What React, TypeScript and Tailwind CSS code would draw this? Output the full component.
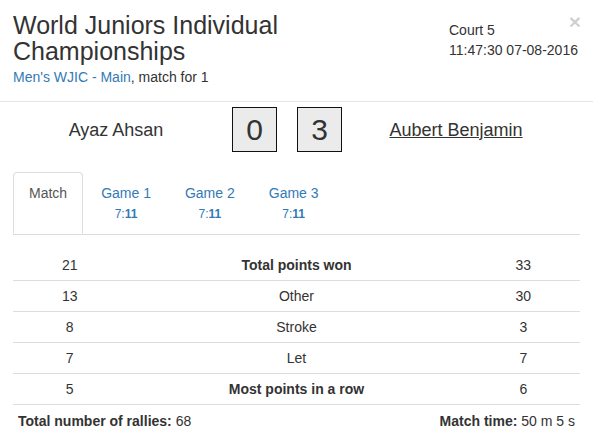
import React from "react";

type StatRow = { left: number; label: string; right: number; strong?: boolean };

const ROWS: StatRow[] = [
  { left: 21, label: "Total points won", right: 33, strong: true },
  { left: 13, label: "Other", right: 30 },
  { left: 8, label: "Stroke", right: 3 },
  { left: 7, label: "Let", right: 7 },
  { left: 5, label: "Most points in a row", right: 6, strong: true },
];

const GAMES = ["Game 1", "Game 2", "Game 3"];

function ScoreBox({ value }: { value: number }) {
  return (
    <div className="flex h-[45px] w-[45px] items-center justify-center border border-[#111] bg-[#ebebeb] text-[30px] leading-none text-[#333]">
      {value}
    </div>
  );
}

export default function App() {
  return (
    <div className="relative h-[440px] w-[593px] overflow-hidden bg-white font-['Liberation_Sans',Arial,sans-serif] text-[14px] leading-[20px] text-[#333]">
      <button className="absolute right-[12px] top-[11px] text-[21px] font-bold leading-[21px] text-black/20">
        ×
      </button>

      {/* header */}
      <div className="flex h-[102px] border-b border-[#e5e5e5] px-[13px]">
        <div className="flex-1 pt-[12px]">
          <h3 className="w-[400px] text-[25px] leading-[26px] font-normal text-[#333]">
            World Juniors Individual Championships
          </h3>
          <div className="mt-[3px]">
            <a className="text-[#337ab7]">Men's WJIC - Main</a>, match for 1
          </div>
        </div>
        <div className="w-[131px] whitespace-nowrap pt-[20px]">
          <div>Court 5</div>
          <div>11:47:30 07-08-2016</div>
        </div>
      </div>

      <div className="px-[13px]">
        {/* players + score */}
        <div className="mt-[5px] flex h-[45px] items-center text-[18px]">
          <div className="w-[206px] text-center">Ayaz Ahsan</div>
          <div className="ml-[13px] flex gap-5">
            <ScoreBox value={0} />
            <ScoreBox value={3} />
          </div>
          <div className="ml-[10px] w-[208px] text-center">
            <span className="underline">Aubert Benjamin</span>
          </div>
        </div>

        {/* tabs */}
        <ul className="mt-[20px] flex border-b border-[#ddd]">
          <li className="mr-[2px] -mb-px">
            <a className="block h-[62px] rounded-t-[4px] border border-[#ddd] border-b-white bg-white px-[15px] py-[10px] text-[#555]">
              Match
            </a>
          </li>
          {GAMES.map((g) => (
            <li key={g} className="mr-[2px] -mb-px">
              <a className="block rounded-t-[4px] border border-transparent px-[15px] py-[10px] text-center text-[#337ab7]">
                {g}
                <br />
                <small className="text-[12px]">
                  7:<b>11</b>
                </small>
              </a>
            </li>
          ))}
        </ul>

        {/* stats */}
        <div className="pt-[15px]">
          {ROWS.map((r) => (
            <div key={r.label} className="grid h-[31px] grid-cols-[1fr_3fr_1fr] items-center border-b border-[#ddd] text-center">
              <div>{r.left}</div>
              <div className={r.strong ? "font-bold" : ""}>{r.label}</div>
              <div>{r.right}</div>
            </div>
          ))}
        </div>

        <div className="mt-[6px] flex justify-between px-[5px]">
          <div>
            <b>Total number of rallies:</b> 68
          </div>
          <div>
            <b>Match time:</b> 50 m 5 s
          </div>
        </div>
      </div>
    </div>
  );
}
